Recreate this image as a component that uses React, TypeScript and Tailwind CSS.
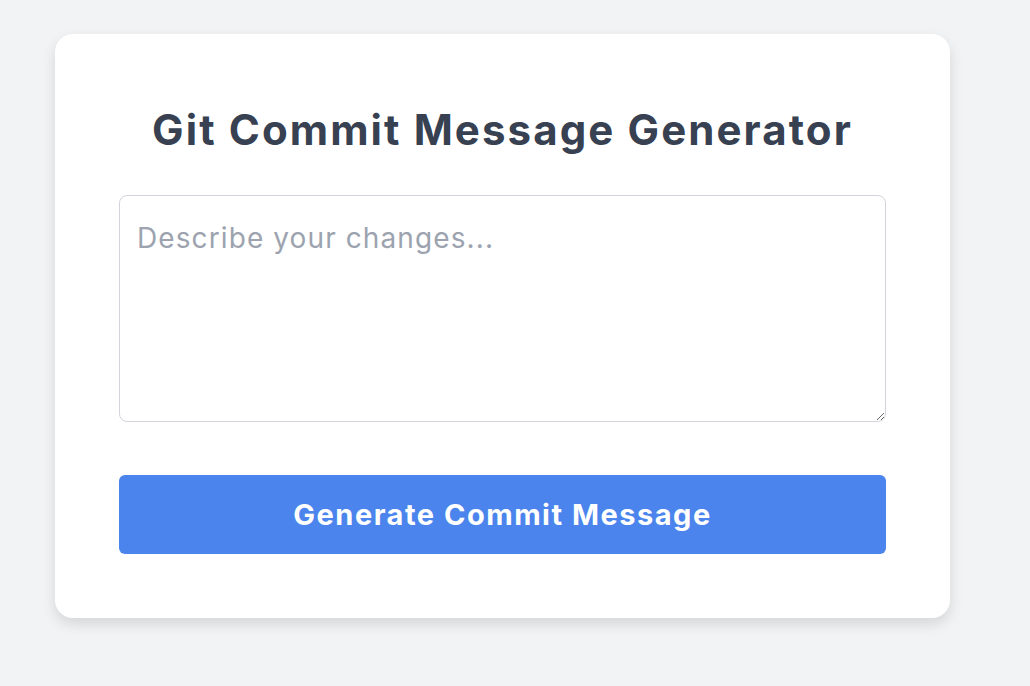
export default function App() {
  return (
    <div
      className="min-h-[686px] bg-[#f2f3f5] pt-[34px] pl-[55px]"
      style={{ fontFamily: 'Inter, "Noto Sans", sans-serif' }}
    >
      <div className="w-[895px] rounded-[18px] bg-white px-[64px] pt-[69px] pb-[64px] shadow-[0_6px_14px_rgba(0,0,0,0.12)]">
        <h1 className="text-center text-[42px] leading-[54px] font-bold tracking-[2.1px] text-[#374151]">
          Git Commit Message Generator
        </h1>
        <textarea
          className="mt-[38px] block h-[227px] w-full resize-y rounded-[8px] border-[1.5px] border-[#d1d5db] px-[17px] pt-[22px] pb-[12px] text-[28px] leading-[40px] tracking-[1.1px] text-[#374151] placeholder:text-[#9ca3af] focus:outline-none"
          placeholder="Describe your changes..."
        />
        <button className="mt-[53px] block h-[79px] w-full rounded-[6px] bg-[#4a84ec] text-[29px] font-bold tracking-[1.5px] text-white">
          Generate Commit Message
        </button>
      </div>
    </div>
  )
}
